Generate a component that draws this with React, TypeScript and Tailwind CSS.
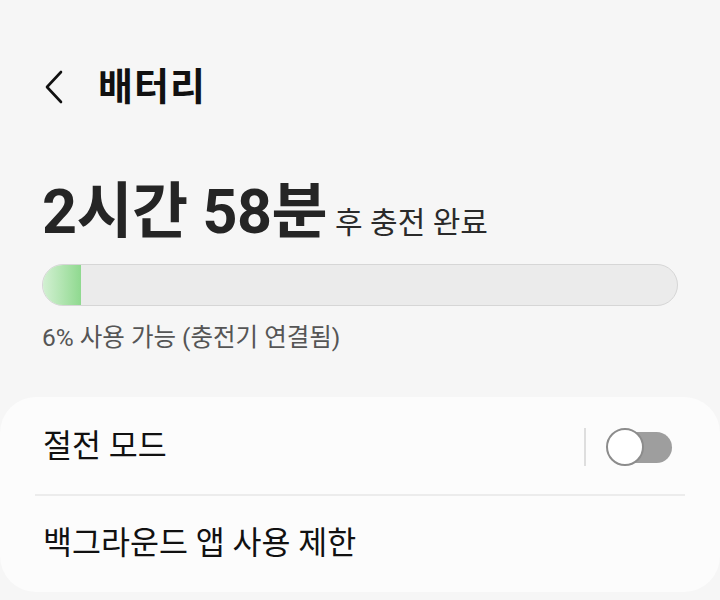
import React from "react";

function Toggle({ on }: { on: boolean }) {
  return (
    <div className="relative w-[66px] h-[38px] flex items-center">
      <div className="absolute left-[6px] right-0 h-[31px] rounded-full bg-[#9e9e9e]" />
      <div
        className={
          on
            ? "absolute right-0 w-[38px] h-[38px] rounded-full bg-white border-[2.5px] border-[#8c8c8c]"
            : "absolute left-0 w-[38px] h-[38px] rounded-full bg-white border-[2.5px] border-[#8c8c8c]"
        }
      />
    </div>
  );
}

export default function App() {
  const percent = 6;

  return (
    <div
      className="w-[720px] h-[600px] overflow-hidden bg-[#f6f6f6] text-[#1c1c1c]"
      style={{ fontFamily: "Roboto, 'Noto Sans CJK KR', sans-serif" }}
    >
      <div className="flex items-center h-[70px] mt-[52px] pl-[40px]">
        <svg width="30" height="36" viewBox="0 0 30 36" fill="none">
          <path d="M21 3 L7 18 L21 33" stroke="#111" strokeWidth="2.6" strokeLinecap="round" strokeLinejoin="round" />
        </svg>
        <h1 className="ml-[28px] text-[38px] font-bold leading-none tracking-[1px] text-[#111]">배터리</h1>
      </div>

      <div className="px-[42px] mt-[60px]">
        <div className="flex items-baseline">
          <span className="text-[61px] font-bold leading-none tracking-[-0.5px] text-[#252525]">2시간 58분</span>
          <span className="ml-[8px] text-[30px] leading-none text-[#2a2a2a]">후 충전 완료</span>
        </div>

        <div className="mt-[21px] h-[42px] rounded-full bg-[#ebebeb] border border-[#d6d6d6] overflow-hidden flex">
          <div
            className="h-full bg-gradient-to-r from-[#d2f0d2] to-[#8fd98f]"
            style={{ width: `${percent}%` }}
          />
        </div>

        <p className="mt-[20px] text-[24.5px] leading-none text-[#555]">6% 사용 가능 (충전기 연결됨)</p>
      </div>

      <div className="mt-[46px] mx-0 rounded-[36px] bg-[#fcfcfc] px-[35px]">
        <div className="flex items-center h-[97px] pl-[8px] pt-[4px]">
          <span className="flex-1 text-[31.5px] text-[#111]">절전 모드</span>
          <div className="w-[2px] h-[38px] bg-[#dedede] mr-[20px]" />
          <div className="mr-[13px]">
            <Toggle on={false} />
          </div>
        </div>
        <div className="h-[2px] bg-[#ececec]" />
        <div className="flex items-center h-[96px] pl-[8px]">
          <span className="text-[31.5px] text-[#111]">백그라운드 앱 사용 제한</span>
        </div>
      </div>
    </div>
  );
}
